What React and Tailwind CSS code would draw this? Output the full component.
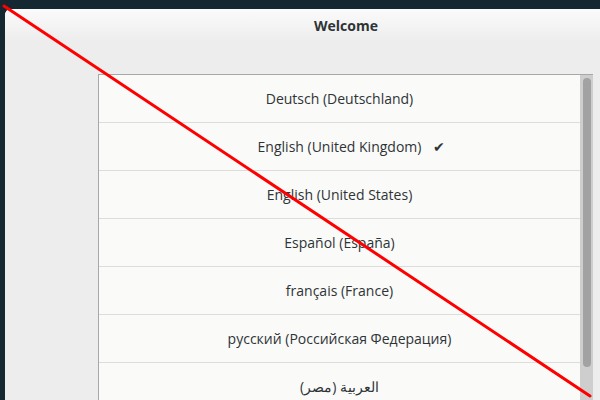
const languages = [
  { name: 'Deutsch (Deutschland)' },
  { name: 'English (United Kingdom)', selected: true },
  { name: 'English (United States)' },
  { name: 'Español (España)' },
  { name: 'français (France)' },
  { name: 'русский (Российская Федерация)' },
  { name: 'العربية (مصر)' },
];

function LanguageRow({ name, selected }) {
  return (
    <div className="flex h-[48px] shrink-0 items-center justify-center border-b border-[#dcdcdc] text-[14px] text-[#2e3436]">
      <span className="relative">
        {name}
        {selected ? <span className="absolute left-full top-0 ml-[12px] text-[14px]">✔</span> : null}
      </span>
    </div>
  );
}

export default function App() {
  return (
    <div
      className="relative h-[400px] w-[600px] overflow-hidden bg-[#152831]"
      style={{ fontFamily: '"Open Sans", "Noto Sans", sans-serif' }}
    >
      <div className="ml-[5px] mt-[9px] flex h-[391px] w-[682px] flex-col rounded-tl-[6px] bg-[#ededed]">
        <div className="flex h-[32px] shrink-0 items-center justify-center rounded-tl-[6px] bg-gradient-to-b from-[#fbfbfb] to-[#ededed] text-[14px] font-bold text-[#2e3436]">
          Welcome
        </div>
        <div className="ml-[93px] mt-[33px] flex w-[495px] flex-1 border-l border-t border-[#a8a8a8] bg-[#fafaf9]">
          <div className="flex flex-1 flex-col overflow-hidden">
            {languages.map((lang) => (
              <LanguageRow key={lang.name} {...lang} />
            ))}
          </div>
          <div className="flex w-[13px] shrink-0 justify-center bg-[#cecece] pt-[3px]">
            <div className="h-[289px] w-[8px] rounded-full bg-[#a2a2a2]" />
          </div>
        </div>
      </div>
      <svg className="absolute inset-0" width="600" height="400">
        <line x1="4" y1="6" x2="590" y2="396" stroke="#ff0000" strokeWidth="3" strokeLinecap="round" />
      </svg>
    </div>
  );
}
